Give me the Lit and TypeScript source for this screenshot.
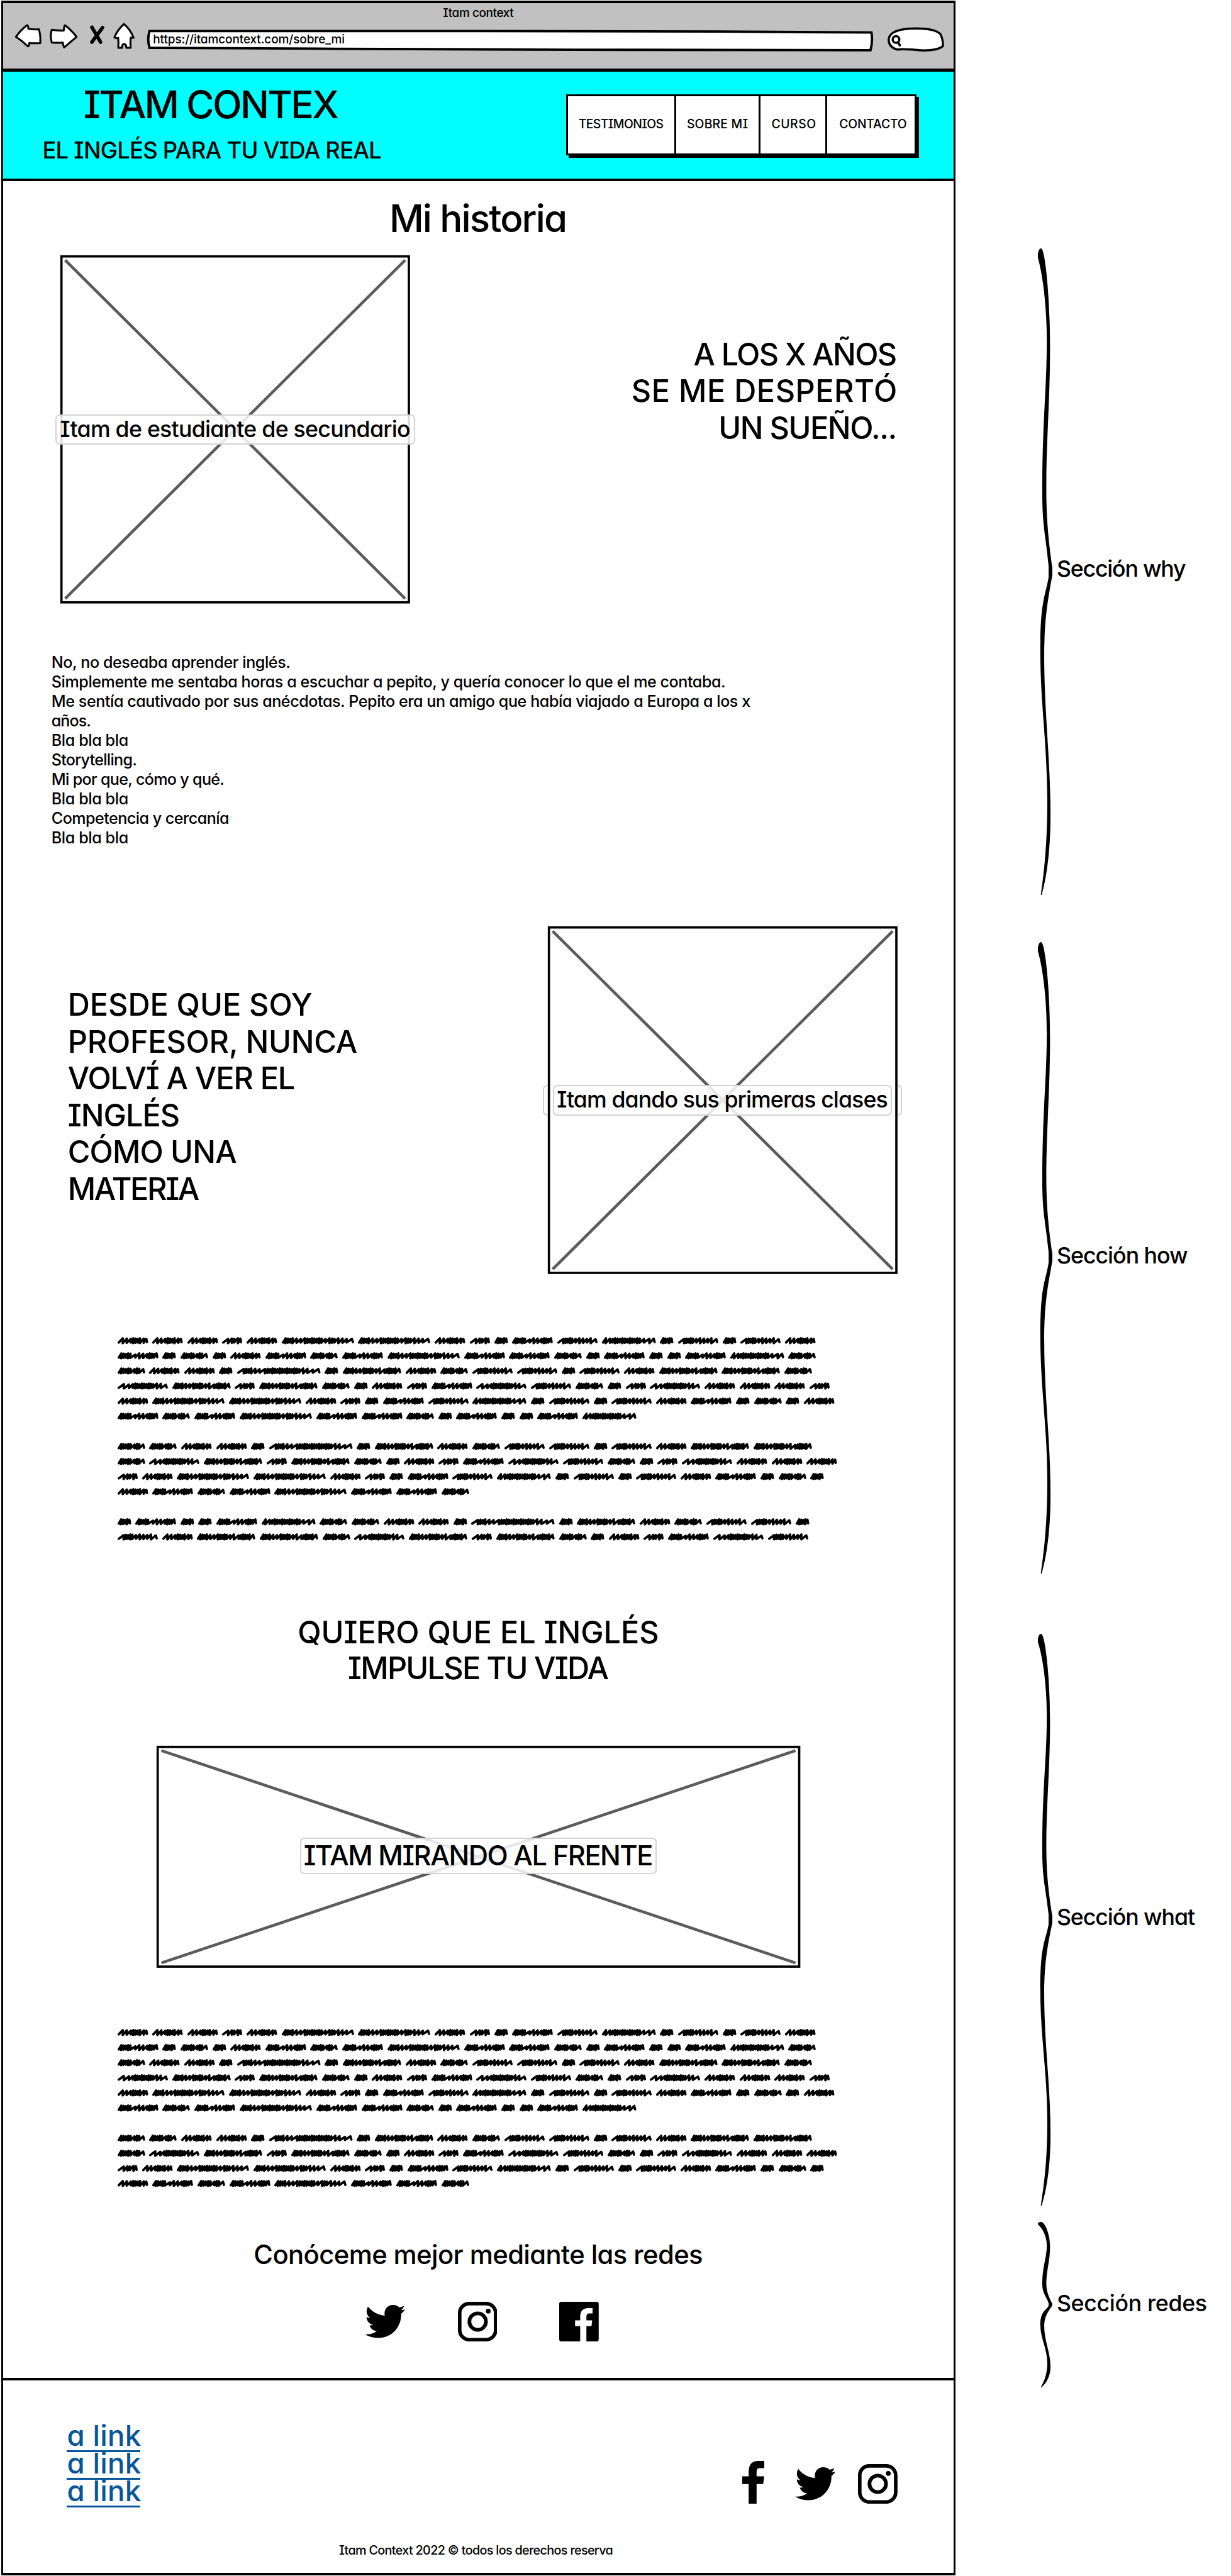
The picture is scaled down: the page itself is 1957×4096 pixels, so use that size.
import { LitElement, html, css, unsafeCSS, nothing } from "lit";
import { customElement, property, state, query } from "lit/decorators.js";

// Design units are converted to CSS pixels with one factor.
const K = 0.7602;
const u = (n: number) => unsafeCSS(`${+(n * K).toFixed(3)}px`);
const p = (n: number) => +(n * K).toFixed(3);

/** One line of lettering, tracked so that its ink fills a given width. */
@customElement("ink-line")
class InkLine extends LitElement {
  @property() text = "";
  @property({ type: Number }) size = 25;
  @property({ type: Number }) w = 100;
  @property({ type: Number }) lh = 0;
  @state() private track = 0;
  @query(".t") private span!: HTMLElement;

  static styles = css`
    :host { display: block; flex: none; }
    .box { display: block; }
    .t { display: inline-block; white-space: pre; }
  `;

  firstUpdated() {
    const natural = this.span.getBoundingClientRect().width;
    const target = (this.w + this.size * 0.12) * K;
    this.track = (target - natural) / Math.max(1, this.text.length - 1);
  }

  render() {
    const s = this.size;
    return html`<div class="box" style="width:${p(this.w)}px;height:${p(this.lh || s * 1.2)}px;line-height:${p(this.lh || s * 1.2)}px;font-size:${p(s)}px">
      <span class="t" style="letter-spacing:${this.track.toFixed(3)}px;margin-left:${p(-s * 0.06)}px">${this.text}</span>
    </div>`;
  }
}

const line = (text: string, size: number, w: number, lh = 0) =>
  html`<ink-line .text=${text} .size=${size} .w=${w} .lh=${lh}></ink-line>`;

/**
 * Scribbled filler words: width and pen rhythm of each shape.
 * d = dense stroke, o = open stroke, w = wide stroke.
 */
const WORDS: Record<string, [number, string]> = {
  A: [64, "oooddddod"],
  B: [42.3, "wodod"],
  C: [151.3, "ddddooodddddddooddooow"],
  D: [85.4, "dddddwooodddd"],
  E: [28.5, "ddddd"],
  F: [57.8, "dddddoddo"],
  G: [174.5, "wdddoowddddddddddddddooww"],
  H: [122.2, "ddddoooddddoowdddddo"],
  I: [105.3, "wwodddddddddoow"],
  J: [84.4, "wddddooooow"],
  K: [112.8, "doddddddddddddowo"],
};
const STEP: Record<string, number> = { d: 4, o: 7, w: 9 };
const PARAS = [
  ["AAABACCABEDJKEJEJA", "DEFEADFDCDDFEDEEDKF", "FAAEGEHAFJJEJAHHF", "IHBHFEABDIJFEBIAAAB", "ACCABEDJKEJEJADEFEA", "DFDCDDFEDEEDK"],
  ["FFAAEGEHAFJJEJAHH", "FIHBHFEABDIJFEBIAAA", "BACCABEDJKEJEJADEFE", "ADFDCDDF"],
  ["EDEEDKFFAAEGEHAFJJE", "JAHHFIHBHFEABDIJ"],
];
const scribble = (w: number, rhythm: string) => {
  const total = [...rhythm].reduce((a, c) => a + STEP[c], 0);
  const f = (w - 7) / total;
  let x = 2.3;
  let d = "";
  [...rhythm].forEach((c, i) => {
    const step = STEP[c] * f;
    const low = 11.4 + ((i * 2) % 3) * 0.7;
    const high = (c === "w" ? 3.8 : 2.6) + (i % 3) * 0.7;
    d += `${i ? "L" : "M"}${x.toFixed(1)} ${low}L${(x + step + (c === "d" ? 0.8 : 0.2)).toFixed(1)} ${high}`;
    x += step;
  });
  return d + `L${(w - 2.6).toFixed(1)} 10.6`;
};

@customElement("scribble-text")
class ScribbleText extends LitElement {
  @property({ type: Number }) paragraphs = 3;
  static styles = css`
    :host { display: flex; flex-direction: column; gap: ${u(31.6)}; }
    .row { display: flex; gap: ${u(9)}; height: ${u(31.6)}; align-items: center; }
    svg { display: block; flex: none; overflow: visible; }
    path { fill: none; stroke: #000; stroke-width: 4.9; stroke-linecap: round; stroke-linejoin: round; }
  `;
  render() {
    return PARAS.slice(0, this.paragraphs).map(
      (rows) => html`<div>${rows.map(
        (r) => html`<div class="row">${[...r].map((k) => {
          const [w, rhythm] = WORDS[k];
          return html`<svg width=${p(w)} height=${p(15)} viewBox="0 0 ${w} 15"><path d=${scribble(w, rhythm)}></path></svg>`;
        })}</div>`
      )}</div>`
    );
  }
}

/** Crossed image placeholder with a caption plate in its middle. */
@customElement("image-box")
class ImageBox extends LitElement {
  @property({ type: Number }) w = 731;
  @property({ type: Number }) h = 728;
  @property({ type: Number }) plate = 752;
  @property({ type: Number }) plateH = 64;
  @property({ type: Number }) ghost = 0;
  @property({ type: Number }) size = 47;
  @property({ type: Number }) textW = 727;
  @property({ type: Number }) lift = 0;
  @property() text = "";
  static styles = css`
    :host { display: block; flex: none; }
    .wrap { display: grid; grid-template: 100% / 100%; place-items: center; }
    .wrap > * { grid-area: 1 / 1; }
    svg { display: block; overflow: visible; }
    .plate { display: grid; place-items: center; box-sizing: border-box; padding-bottom: ${u(5)}; border: 2px solid #d3d3d3; border-radius: ${u(9)}; background: rgba(255, 255, 255, 0.85); }
    .ghost { box-sizing: border-box; border: 2px solid #d3d3d3; border-radius: ${u(9)}; }
  `;
  render() {
    const { w, h } = this;
    return html`<div class="wrap" style="width:${p(w)}px;height:${p(h)}px">
      ${this.ghost ? html`<div class="ghost" style="width:${p(this.ghost)}px;height:${p(this.plateH)}px"></div>` : nothing}
      <svg width=${p(w)} height=${p(h)} viewBox="0 0 ${w} ${h}">
        <rect x="2.2" y="2.2" width=${w - 4.4} height=${h - 4.4} fill="#fff" stroke="#000" stroke-width="4.8"></rect>
        <path d="M10 10L${w - 10} ${h - 10}M${w - 10} 10L10 ${h - 10}" stroke="#5b5b5b" stroke-width="6"></path>
      </svg>
      <div class="plate" style="width:${p(this.plate)}px;height:${p(this.plateH)}px;margin-bottom:${p(this.lift)}px">${line(this.text, this.size, this.textW)}</div>
    </div>`;
  }
}

const twitter = html`<svg width=${p(84.5)} height=${p(69)} viewBox="0 0 84.5 69"><path d="M0 61.3C9 62.400 18 60 25.500 54.300C18 54.300 12 49.500 9.800 42.300C12.500 42.800 15 42.700 17.400 41.700C9 40 3.600 33.500 3.600 25.300C6 26.600 8.500 27.200 11 27.200C3.500 22 1.500 12 6.700 3.700C15.500 14.500 28 21.500 41.700 22.300C39 10 47.500 0 59 0C64 0 68.800 2 72.300 5.300C76 4.600 79.200 3.500 82 2C80.800 6 78.500 9 75.900 11C79 10.700 81.700 10 84.500 9C82.400 12.500 79.500 15.500 76 18.300C77 43 59 69 27 69C17 69 7.500 66.200 0 61.300Z"></path></svg>`;
const instagram = html`<svg width=${p(82.6)} height=${p(83)} viewBox="0 0 82.600 83"><rect x="3.700" y="3.700" width="75.200" height="75.600" rx="20" fill="none" stroke="#000" stroke-width="7.500"></rect><circle cx="41.300" cy="41.400" r="17.300" fill="none" stroke="#000" stroke-width="7.700"></circle><circle cx="63.400" cy="19.600" r="5"></circle></svg>`;
const facebookSquare = html`<svg width=${p(82.6)} height=${p(83)} viewBox="0 0 82.600 83"><path d="M4.500 0H78.100Q82.600 0 82.600 4.500V78.500Q82.600 83 78.100 83H56.900V51H67.500L69 38.700H56.900V31Q57 24.300 62.800 24.200H69.800V13H61Q44 13.500 43.900 31V38.700H33.200V51H43.900V83H4.500Q0 83 0 78.500V4.500Q0 0 4.500 0Z"></path></svg>`;
const facebook = html`<svg width=${p(46.5)} height=${p(89.3)} viewBox="0 0 46.500 89.300"><path d="M13.400 89.300V48.300H0V32.300H13.400V22Q14 1 32 0H46.500V15H37Q30 15 30 22V32.300H46L43.700 48.300H30V89.300Z"></path></svg>`;

const brace = (h: number) => html`<svg class="brace" width=${p(30.5)} height=${p(h)} viewBox="0 0 90 836" preserveAspectRatio="none"><path d="M0 7C8 -1 24 -3 34 6C55 24 75 75 75 128C75 195 53 245 52 308C52 350 66 378 90 414L90 421C66 450 40 475 39 525C39 600 78 660 78 732C78 780 52 815 23 836L18 836C42 800 58 765 58 715C58 640 15 590 15 520C15 455 46 450 66 425L66 410C48 370 27 360 27 315C27 225 55 180 55 120C55 80 35 38 0 12Z"></path></svg>`;

const STORY: [string, number][] = [
  ["No, no deseaba aprender inglés.", 496],
  ["Simplemente me sentaba horas a escuchar a pepito, y quería conocer lo que el me contaba.", 1406],
  ["Me sentía cautivado por sus anécdotas. Pepito era un amigo que había viajado a Europa a los x", 1458],
  ["años.", 79],
  ["Bla bla bla", 157],
  ["Storytelling.", 175],
  ["Mi por que, cómo y qué.", 358],
  ["Bla bla bla", 157],
  ["Competencia y cercanía", 368],
  ["Bla bla bla", 157],
];
const MENU: [string, number, number][] = [
  ["TESTIMONIOS", 175, 227],
  ["SOBRE MI", 125, 176],
  ["CURSO", 90, 140],
  ["CONTACTO", 138, 183],
];
const NOTES: [string, number, number, number][] = [
  ["Sección why", 265, 519, 1353],
  ["Sección how", 269, 99, 1321],
  ["Sección what", 284, 126, 1196],
  ["Sección redes", 309, 34, 346],
];

@customElement("app-root")
class AppRoot extends LitElement {
  static styles = css`
    :host {
      display: block; width: 1957px; height: 4096px; overflow: hidden; background: #fff; color: #000;
      font-family: Inter, "Noto Sans", sans-serif; font-weight: 500;
      font-feature-settings: "cv08" 1, "cv11" 1, "calt" 0, "liga" 0;
    }
    * { box-sizing: border-box; }
    svg { display: block; flex: none; }
    .canvas { display: flex; height: 100%; }
    .frame { width: 1517px; height: ${u(5386)}; margin: 1px 0 0 2px; border: solid #000; border-width: 0 3px; flex: none; }
    .chrome { height: ${u(148)}; background: #c1c1c1; border: solid #000; border-width: 4px 0 5px; }
    .title { display: flex; justify-content: center; height: ${u(39)}; }
    .bar { display: flex; height: ${u(60)}; margin-left: ${u(24)}; }
    .search { margin-left: ${u(28)}; margin-top: ${u(11)}; }
    .url { margin-left: ${u(24)}; display: grid; grid-template: 100% / 100%; align-items: center; }
    .url > * { grid-area: 1 / 1; }
    .url ink-line { margin-left: ${u(15)}; margin-top: ${u(15)}; }
    .header { display: flex; justify-content: space-between; height: ${u(230)}; background: #00ffff; border-bottom: 4px solid #000; }
    .brand { display: flex; flex-direction: column; align-items: center; margin-left: ${u(84.5)}; padding-top: ${u(19)}; width: ${u(705)}; }
    .brand ink-line:first-child { margin-right: ${u(4)}; }
    .menu { display: flex; height: ${u(128)}; margin-top: ${u(48)}; margin-right: ${u(77)}; background: #fff; border: 3px solid #000; box-shadow: 4px 4px 0 #000; }
    .item { display: grid; place-items: center; border-right: 3px solid #000; padding-bottom: ${u(3)}; }
    .item:nth-child(3) { padding-left: ${u(3)}; }
    .item:last-child { border-right: 0; padding-left: ${u(8)}; }
    .body { height: ${u(4595)}; }
    .h1 { display: flex; justify-content: center; padding-top: ${u(27)}; height: ${u(155)}; }
    .why { display: flex; justify-content: space-between; padding: 0 ${u(122)} 0 ${u(120)}; height: ${u(728)}; }
    .right { display: flex; flex-direction: column; align-items: flex-end; padding-top: ${u(169)}; }
    .story { padding: ${u(103)} 0 0 ${u(103)}; height: ${u(676)}; }
    .how { display: flex; justify-content: space-between; padding: 0 ${u(118)} 0 ${u(139)}; height: ${u(727)}; }
    .left { padding-top: ${u(126)}; }
    .filler { padding-left: ${u(239)}; }
    .f1 { padding-top: ${u(123)}; height: ${u(711)}; }
    .what { display: flex; flex-direction: column; align-items: center; height: ${u(276)}; }
    .pic { display: flex; justify-content: center; height: ${u(464)}; }
    .f2 { padding-top: ${u(119)}; height: ${u(561)}; }
    .social { display: flex; flex-direction: column; align-items: center; }
    .icons { display: flex; align-items: center; margin-top: ${u(60)}; gap: ${u(110)}; margin-left: ${u(14)}; }
    .icons svg:last-child { margin-left: ${u(20)}; }
    .footer { height: ${u(412)}; border: solid #000; border-width: 4px 0 4px; display: flex; flex-direction: column; }
    .frow { display: flex; justify-content: space-between; height: ${u(319)}; padding: ${u(91)} ${u(117)} 0 ${u(133)}; }
    .link { display: block; height: ${u(58)}; width: ${u(154)}; padding-left: ${u(4)}; border-bottom: 3px solid #07569a; color: #07569a; text-decoration: none; }
    .ficons { display: flex; align-items: flex-end; height: ${u(166)}; }
    .ficons svg:nth-child(2) { margin: 0 ${u(48)} ${u(7)} ${u(64)}; }
    .copy { padding-left: ${u(704)}; padding-top: ${u(16)}; }
    .notes { margin-left: ${u(2170.5 - 1998.5)}; display: flex; flex-direction: column; }
    .note { display: flex; align-items: center; gap: ${u(12)}; }
    .note ink-line { margin-bottom: ${u(12)}; }
    .note:last-child ink-line { margin-bottom: ${u(8)}; }
  `;

  render() {
    return html`<div class="canvas">
      <div class="frame">
        <div class="chrome">
          <div class="title">${line("Itam context", 25, 145, 42)}</div>
          <div class="bar">
            <svg width=${p(252)} height=${p(60)} viewBox="31 44 252 60" fill="#fff" stroke="#000" stroke-width="4" stroke-linejoin="round">
              <path d="M34 75Q44 61 57 51Q60 50 60 58Q70 60 82 59Q86 72 85 88Q73 89 62 88Q62 94 59 95Q47 83 34 75Z"></path>
              <path d="M161 75Q150 61 137 51Q135 50 134 62Q120 62 109 60Q105 72 109 87Q120 88 132 87Q133 94 135 97Q149 85 161 75Z"></path>
              <path d="M260 48Q246 61 240 76Q243 79 248 77Q249 88 248 98H256Q256 90 260 90Q265 90 265 98H274Q273 88 274 77H280Q274 60 260 48Z"></path>
              <path d="M193 55L211 86M215 56L193 86" stroke-width="7.500" stroke-linecap="round"></path>
            </svg>
            <div class="url">
              <svg width=${p(1520)} height=${p(60)} viewBox="306 44 1520 60" overflow="visible"><path d="M312 63L1000 63L1500 64L1822 66Q1825 85 1820 103L1200 102L700 100L312 98Q307 80 312 63Z" fill="#fff" stroke="#000" stroke-width="5"></path></svg>
              ${line("https://itamcontext.com/sobre_mi", 25, 398, 30)}
            </div>
            <svg class="search" width=${p(122)} height=${p(52)} viewBox="1854 56 122 52"><path d="M1875 103Q1856 97 1858 80Q1862 59 1915 59Q1955 59 1966 71Q1972 84 1971 96Q1960 105 1930 105Q1890 101 1875 103Z" fill="#fff" stroke="#000" stroke-width="4.500"></path><circle cx="1873" cy="82" r="7" fill="none" stroke="#000" stroke-width="4.500"></circle><path d="M1877 88L1881 94" stroke="#000" stroke-width="5" stroke-linecap="round"></path></svg>
          </div>
        </div>
        <div class="header">
          <div class="brand">
            ${line("ITAM CONTEX", 80, 525, 100)}
            ${line("EL INGLÉS PARA TU VIDA REAL", 48, 704, 94)}
          </div>
          <div class="menu">${MENU.map(([t, w, c]) => html`<div class="item" style="width:${p(c)}px">${line(t, 25.5, w)}</div>`)}</div>
        </div>
        <div class="body">
          <div class="h1">${line("Mi historia", 79, 363, 100)}</div>
          <div class="why">
            <image-box .w=${731} .h=${728} .text=${"Itam de estudiante de secundario"}></image-box>
            <div class="right">
              ${line("A LOS X AÑOS", 64, 418, 77)}
              ${line("SE ME DESPERTÓ", 64, 548, 77)}
              ${line("UN SUEÑO...", 64, 366, 77)}
            </div>
          </div>
          <div class="story">${STORY.map(([t, w]) => line(t, 33, w, 40.75))}</div>
          <div class="how">
            <div class="left">
              ${line("DESDE QUE SOY", 64, 504, 77)}
              ${line("PROFESOR, NUNCA", 64, 598, 77)}
              ${line("VOLVÍ A VER EL", 64, 468, 77)}
              ${line("INGLÉS", 64, 227, 77)}
              ${line("CÓMO UNA", 64, 346, 77)}
              ${line("MATERIA", 64, 268, 77)}
            </div>
            <image-box .w=${731} .h=${727} .plate=${709} .ghost=${751} .textW=${687} .text=${"Itam dando sus primeras clases"}></image-box>
          </div>
          <div class="filler f1"><scribble-text .paragraphs=${3}></scribble-text></div>
          <div class="what">
            ${line("QUIERO QUE EL INGLÉS", 64, 748, 75)}
            ${line("IMPULSE TU VIDA", 64, 538, 77)}
          </div>
          <div class="pic"><image-box .w=${1346} .h=${464} .plate=${746} .plateH=${76} .size=${57} .lift=${5} .textW=${724} .text=${"ITAM MIRANDO AL FRENTE"}></image-box></div>
          <div class="filler f2"><scribble-text .paragraphs=${2}></scribble-text></div>
          <div class="social">
            ${line("Conóceme mejor mediante las redes", 55, 933, 77)}
            <div class="icons">${twitter}${instagram}${facebookSquare}</div>
          </div>
        </div>
        <div class="footer">
          <div class="frow">
            <div>${[0, 1, 2].map(() => html`<a class="link">${line("a link", 60, 148, 48)}</a>`)}</div>
            <div class="ficons">${facebook}${twitter}${instagram}</div>
          </div>
          <div class="copy">${line("Itam Context 2022 © todos los derechos reserva", 26, 570, 40)}</div>
        </div>
      </div>
      <div class="notes">${NOTES.map(([t, w, top, h]) => html`<div class="note" style="margin-top:${p(top)}px">${brace(h)}${line(t, 47, w, 58)}</div>`)}</div>
    </div>`;
  }
}
